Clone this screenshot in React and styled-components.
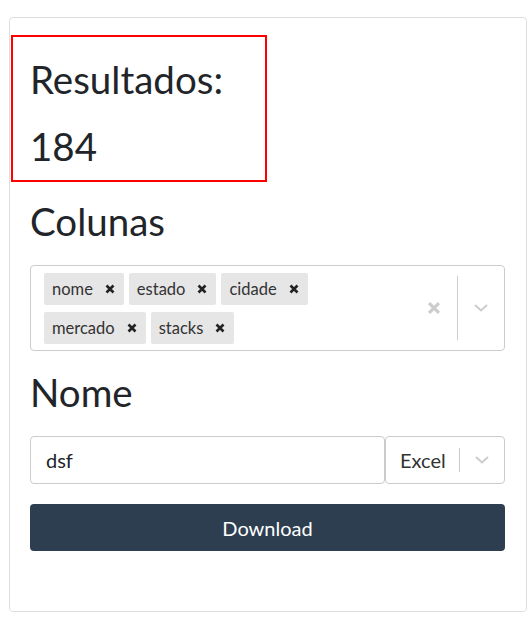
import React from 'react'
import styled, { createGlobalStyle } from 'styled-components'

const GlobalStyle = createGlobalStyle`
	body {
		margin: 0;
		background: #fff;
		font-family: Lato, "Open Sans", sans-serif;
		color: #212529;
	}
`

const Page = styled.div`
	padding: 17px 0 0 9px;
`

const Card = styled.div`
	width: 475px;
	height: 553px;
	padding: 20px 21px 20px 20px;
	border: 1px solid #ddd;
	border-radius: 4px;
`

const ResultBox = styled.div`
	display: flex;
	flex-direction: column;
	gap: 20px;
	width: 235px;
	margin: -3px 0 0 -19px;
	padding: 19px 0 10px 17px;
	border: 2px solid red;
`

const Heading = styled.div`
	font-size: 38.5px;
	line-height: 47px;
	margin: ${p => p.$top || 0}px 0 ${p => p.$bottom ?? 20}px 0;
`

const MultiSelect = styled.div`
	display: flex;
	align-items: center;
	min-height: 84px;
	border: 1px solid #ccc;
	border-radius: 4px;
`

const TagList = styled.div`
	flex: 1;
	display: flex;
	flex-wrap: wrap;
	gap: 7px 5px;
	padding: 5px 13px;
`

const Tag = styled.div`
	display: flex;
	align-items: center;
	height: 32px;
	padding: 0 0 0 8px;
	background: #e6e6e6;
	border-radius: 2px;
	font-size: 16.5px;
	color: #333;
`

const TagRemove = styled.span`
	display: flex;
	align-items: center;
	padding: 0 9px 0 12px;
	color: #222;
`

const Indicators = styled.div`
	display: flex;
	align-items: center;
	align-self: stretch;
	padding: 10px 0;
`

const IconSlot = styled.div`
	display: flex;
	align-items: center;
	justify-content: center;
	width: ${p => p.$w}px;
	color: #ccc;
`

const Divider = styled.div`
	width: 1px;
	align-self: stretch;
	background: #ccc;
`

const FileRow = styled.div`
	display: flex;
	height: 48px;
`

const NameInput = styled.div`
	flex: 1;
	display: flex;
	align-items: center;
	padding: 0 15px;
	border: 1px solid #ccc;
	border-radius: 4px;
	font-size: 20px;
	color: #212529;
`

const FormatSelect = styled.div`
	width: 118px;
	display: flex;
	align-items: center;
	border: 1px solid #ccc;
	border-radius: 4px;
	font-size: 20px;
	color: #333;
`

const FormatValue = styled.span`
	flex: 1;
	padding-left: 14px;
`

const SmallDivider = styled.div`
	width: 1px;
	height: 24px;
	background: #ccc;
`

const DownloadButton = styled.button`
	display: block;
	width: 100%;
	height: 47px;
	margin-top: 20px;
	border: none;
	border-radius: 4px;
	background: #2c3e50;
	color: #fff;
	font-family: Lato, sans-serif;
	font-size: 20px;
`

const Cross = ({ size = 10, weight = 2.6 }) => (
	<svg width={size} height={size} viewBox="0 0 10 10">
		<path d="M1.5 1.5L8.5 8.5M8.5 1.5L1.5 8.5" stroke="currentColor" strokeWidth={weight} strokeLinecap="butt" />
	</svg>
)

const Chevron = () => (
	<svg width="16" height="10" viewBox="0 0 16 10">
		<path d="M2 2L8 7.5L14 2" fill="none" stroke="currentColor" strokeWidth="2" />
	</svg>
)

const COLUMNS = ['nome', 'estado', 'cidade', 'mercado', 'stacks']

const App = () => {
	return (
		<Page>
			<GlobalStyle />
			<Card>
				<ResultBox>
					<Heading $bottom={0}>Resultados:</Heading>
					<Heading $bottom={0}>184</Heading>
				</ResultBox>
				<Heading $top={16}>Colunas</Heading>
				<MultiSelect>
					<TagList>
						{COLUMNS.map(c => (
							<Tag key={c}>
								{c}
								<TagRemove><Cross /></TagRemove>
							</Tag>
						))}
					</TagList>
					<Indicators>
						<IconSlot $w={46}><Cross size={14} weight={2.2} /></IconSlot>
						<Divider />
						<IconSlot $w={46}><Chevron /></IconSlot>
					</Indicators>
				</MultiSelect>
				<Heading $top={18}>Nome</Heading>
				<FileRow>
					<NameInput>dsf</NameInput>
					<FormatSelect>
						<FormatValue>Excel</FormatValue>
						<SmallDivider />
						<IconSlot $w={44}><Chevron /></IconSlot>
					</FormatSelect>
				</FileRow>
				<DownloadButton>Download</DownloadButton>
			</Card>
		</Page>
	)
}

export default App
